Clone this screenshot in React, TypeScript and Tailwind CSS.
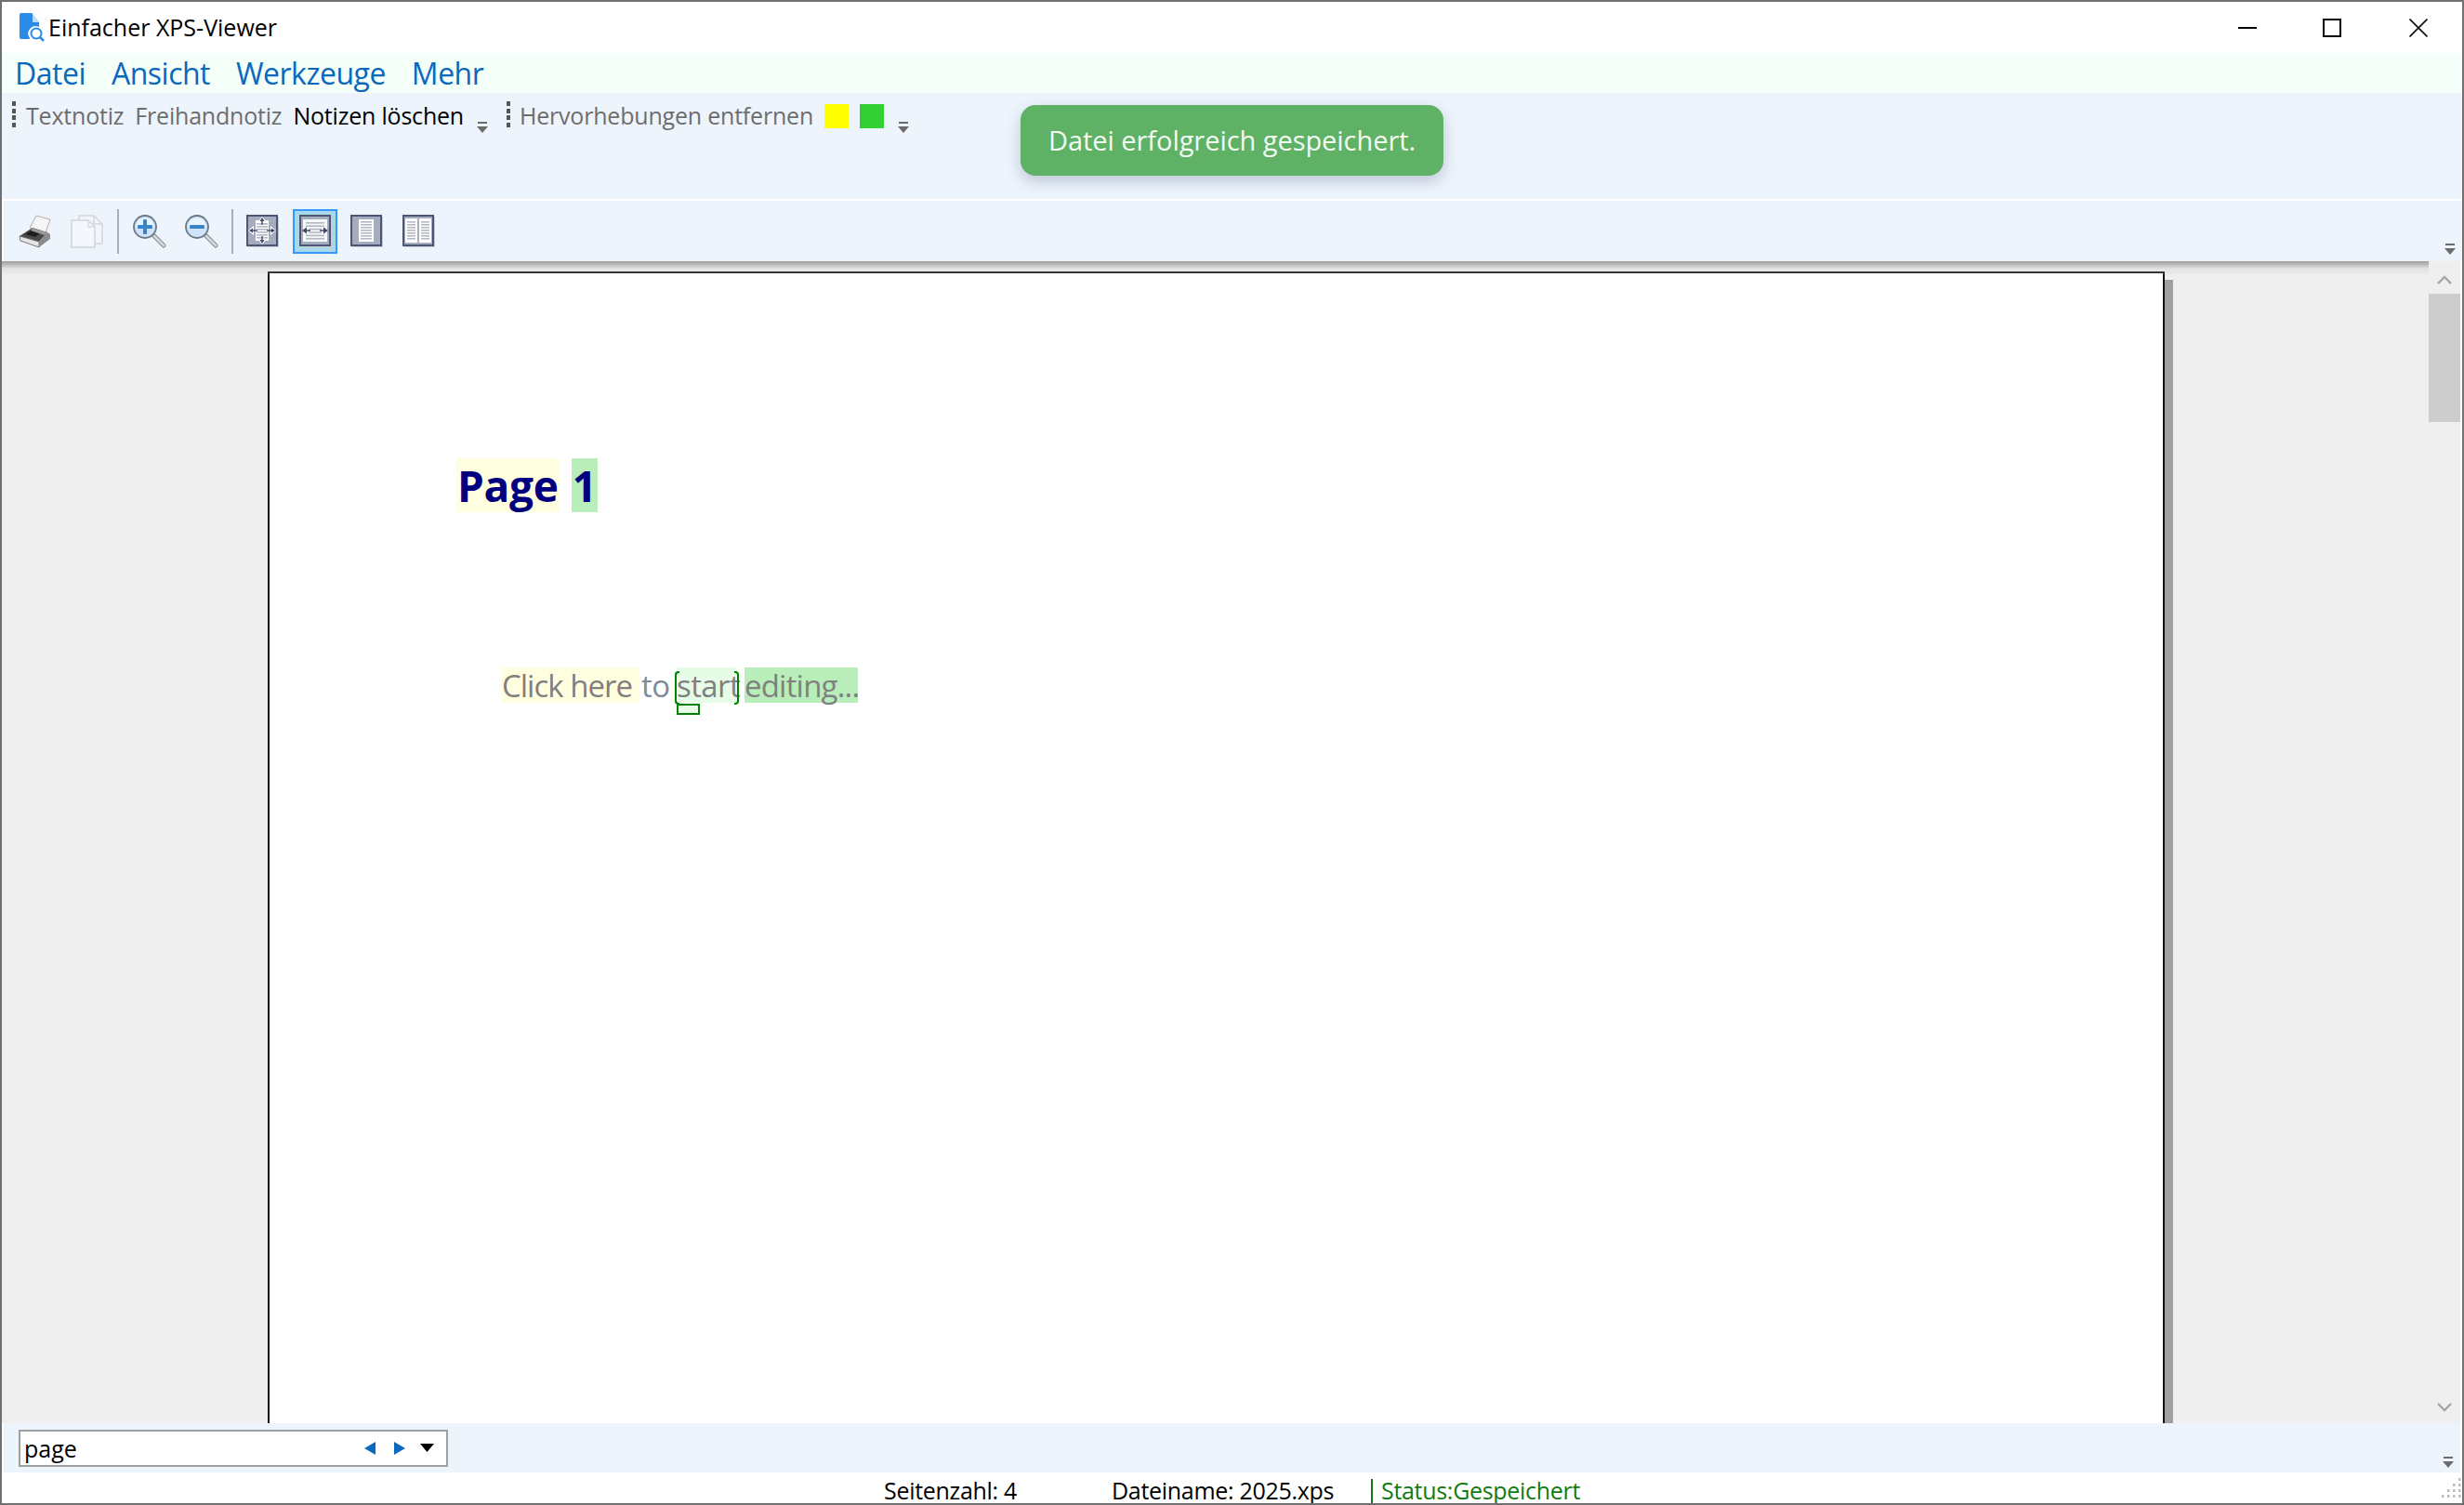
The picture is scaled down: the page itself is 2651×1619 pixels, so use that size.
const ui = { fontFamily: '"Open Sans", "Noto Sans", sans-serif' };

function AppIcon() {
  return (
    <svg width="28" height="31" viewBox="0 0 28 31">
      <path d="M1 2a2 2 0 0 1 2-2h11l8 10v5a8 8 0 0 0-10 12v1H3a2 2 0 0 1-2-2z" fill="#2b8be8" />
      <path d="M15 1l7 9h-7z" fill="#bcdcf9" />
      <circle cx="19" cy="22" r="5.5" fill="#fff" stroke="#2b8be8" strokeWidth="2" />
      <path d="M23 26l4 4" stroke="#2b8be8" strokeWidth="2.5" />
    </svg>
  );
}

function Overflow() {
  return (
    <svg width="12" height="13" viewBox="0 0 12 13" className="block">
      <rect x="1" y="0" width="10" height="2" fill="#6b6b6b" />
      <path d="M0 5h12l-6 7z" fill="#6b6b6b" />
    </svg>
  );
}

function Gripper() {
  return (
    <div className="flex h-[28px] w-[5px] flex-col justify-between">
      <div className="h-[5px] w-[4px] bg-[#555]" />
      <div className="h-[5px] w-[4px] bg-[#555]" />
      <div className="h-[5px] w-[4px] bg-[#555]" />
      <div className="h-[5px] w-[4px] bg-[#555]" />
    </div>
  );
}

function Printer() {
  return (
    <svg width="36" height="36" viewBox="0 0 36 36">
      <path d="M12 14L19 1l15 4-6 17z" fill="#f6f6f6" stroke="#b0b0b0" />
      <path d="M1 23l14-9 16 5-9 10z" fill="#4a4a4a" />
      <path d="M7 21l8-5 9 3-6 5z" fill="#1e1e1e" />
      <path d="M15 14l16 5-3 3-15-5z" fill="#9a9a9a" />
      <path d="M1 23l21 6v6L2 28z" fill="#e4e4e4" stroke="#5a5a5a" strokeWidth="0.8" />
      <path d="M22 29l9-10 3 2v5l-12 9z" fill="#8c8c8c" />
    </svg>
  );
}

function CopyIcon() {
  return (
    <svg width="36" height="36" viewBox="0 0 36 36">
      <path d="M9 1h16l9 9v21H9z" fill="#f2f5f9" stroke="#d2d6dc" strokeWidth="1.5" />
      <path d="M25 1v9h9" fill="none" stroke="#d2d6dc" strokeWidth="1.5" />
      <path d="M1 6h18l7 7v22H1z" fill="#f4f7fb" stroke="#cfd3da" strokeWidth="1.5" />
      <path d="M19 6v7h7" fill="none" stroke="#d8dce2" strokeWidth="1.5" />
    </svg>
  );
}

function Magnifier({ plus }: { plus?: boolean }) {
  return (
    <svg width="36" height="36" viewBox="0 0 36 36">
      <path d="M22 22l11 11" stroke="#9aa0a6" strokeWidth="5" strokeLinecap="round" />
      <path d="M23 23l10 10" stroke="#dfe2e5" strokeWidth="2" strokeLinecap="round" />
      <circle cx="13" cy="13" r="12" fill="#cfe4fa" stroke="#6d7884" strokeWidth="1.8" />
      <path d="M3.5 13a9.5 9.5 0 0 1 19 0z" fill="#eaf4fe" />
      <rect x="5" y="11" width="16" height="4" rx="1" fill="#3a83c6" />
      {plus && <rect x="11" y="5" width="4" height="16" rx="1" fill="#3a83c6" />}
    </svg>
  );
}

function Frame({ children }: { children: React.ReactNode }) {
  return (
    <svg width="35" height="35" viewBox="0 0 35 35">
      <rect x="2" y="2" width="33" height="33" fill="#c6cbd5" />
      <rect x="1" y="1" width="32" height="32" fill="#a5acbd" stroke="#4b5774" strokeWidth="2" />
      {children}
    </svg>
  );
}

function Lines({ x, y, w, n, gap }: { x: number; y: number; w: number; n: number; gap: number }) {
  return (
    <>
      {Array.from({ length: n }).map((_, i) => (
        <rect key={i} x={x} y={y + i * gap} width={w} height="1.6" fill="#b4b8c3" />
      ))}
    </>
  );
}

function FitWhole() {
  return (
    <Frame>
      <rect x="10" y="6" width="14" height="22" fill="#fff" />
      <path d="M17 2l-5 6h10zM17 32l-5-6h10zM2 17l6-5v10zM32 17l-6-5v10z" fill="#fff" />
      <Lines x={11} y={9} w={12} n={6} gap={3} />
      <path d="M17 5v6M17 23v6M5 17h7M22 17h7" stroke="#4b5774" strokeWidth="1.5" />
      <path d="M17 3l-2.5 4h5zM17 31l-2.5-4h5zM3 17l4-2.5v5zM31 17l-4-2.5v5z" fill="#3f4b68" />
    </Frame>
  );
}

function FitWidth() {
  return (
    <Frame>
      <rect x="4" y="5" width="26" height="24" fill="#f6f7f9" />
      <Lines x={7} y={8} w={20} n={6} gap={3.4} />
      <path d="M4 17l6-4.5v9zM30 17l-6-4.5v9z" fill="#fff" />
      <path d="M6 17h6M22 17h6" stroke="#3f4b68" strokeWidth="1.6" />
      <path d="M3 17l5-3.5v7zM31 17l-5-3.5v7z" fill="#3f4b68" />
    </Frame>
  );
}

function OnePage() {
  return (
    <Frame>
      <rect x="9" y="5" width="16" height="24" fill="#fff" />
      <Lines x={11} y={7} w={12} n={7} gap={3} />
    </Frame>
  );
}

function TwoPages() {
  return (
    <Frame>
      <rect x="3" y="4" width="13" height="26" fill="#fff" />
      <rect x="18" y="4" width="13" height="26" fill="#fff" />
      <Lines x={5} y={7} w={9} n={7} gap={3} />
      <Lines x={20} y={7} w={9} n={7} gap={3} />
    </Frame>
  );
}

function Sep() {
  return <div className="h-[48px] w-[2px] bg-[#a9b0b8]" />;
}

function Grip() {
  const dots = [
    [18, 0],
    [18, 6],
    [12, 6],
    [18, 12],
    [12, 12],
    [6, 12],
    [18, 18],
    [12, 18],
    [6, 18],
    [0, 18],
  ];
  return (
    <svg width="21" height="21" viewBox="0 0 21 21">
      {dots.map(([x, y]) => (
        <rect key={`${x}-${y}`} x={x} y={y} width="2.5" height="3" fill="#bdbdbd" />
      ))}
    </svg>
  );
}

export default function App() {
  return (
    <div
      className="relative flex h-[1619px] w-[2651px] flex-col overflow-hidden border-2 border-[#707070] bg-white"
      style={ui}
    >
      {/* title bar */}
      <div className="flex h-[55px] shrink-0 items-center pl-[18px]">
        <AppIcon />
        <span className="ml-[4px] text-[25px] text-black">Einfacher XPS-Viewer</span>
        <div className="ml-auto flex items-center">
          <svg width="20" height="20" viewBox="0 0 20 20" className="mr-[71px]">
            <rect y="9" width="20" height="2" fill="#000" />
          </svg>
          <svg width="20" height="20" viewBox="0 0 20 20" className="mr-[73px]">
            <rect x="1" y="1" width="18" height="18" fill="none" stroke="#000" strokeWidth="2" />
          </svg>
          <svg width="20" height="20" viewBox="0 0 20 20" className="mr-[37px]">
            <path d="M0.5 0.5l19 19M19.5 0.5l-19 19" stroke="#111" strokeWidth="1.7" />
          </svg>
        </div>
      </div>

      {/* menu */}
      <div className="flex h-[43px] shrink-0 items-center gap-[28px] bg-[#f4fff9] pl-[14px] text-[32px] tracking-[-0.5px] text-[#0a68bd]">
        <span>Datei</span>
        <span>Ansicht</span>
        <span>Werkzeuge</span>
        <span>Mehr</span>
      </div>

      {/* notes toolbar */}
      <div className="flex h-[114px] shrink-0 items-start bg-[#edf4fc] pt-[9px] pl-[11px] text-[25px] leading-[30px] tracking-[-0.2px] text-[#6d6d6d]">
        <Gripper />
        <span className="ml-[10px]">Textnotiz</span>
        <span className="ml-[12px]">Freihandnotiz</span>
        <span className="ml-[12px] text-black">Notizen löschen</span>
        <div className="mt-[22px] ml-[14px]">
          <Overflow />
        </div>
        <div className="ml-[20px]">
          <Gripper />
        </div>
        <span className="ml-[9px]">Hervorhebungen entfernen</span>
        <div className="mt-[3px] ml-[12px] h-[26px] w-[26px] bg-[#ffff00]" />
        <div className="mt-[3px] ml-[12px] h-[26px] w-[26px] bg-[#32d032]" />
        <div className="mt-[22px] ml-[15px]">
          <Overflow />
        </div>
      </div>

      {/* view toolbar */}
      <div className="mt-[2px] ml-[2px] flex h-[65px] shrink-0 items-center bg-[#edf4fc] pl-[16px]">
        <Printer />
        <div className="ml-[20px]">
          <CopyIcon />
        </div>
        <div className="ml-[14px]">
          <Sep />
        </div>
        <div className="ml-[15px]">
          <Magnifier plus />
        </div>
        <div className="ml-[20px]">
          <Magnifier />
        </div>
        <div className="ml-[14px]">
          <Sep />
        </div>
        <div className="ml-[14px]">
          <FitWhole />
        </div>
        <div className="ml-[15px] flex h-[48px] w-[48px] items-center justify-center border-2 border-[#3399ff] bg-[#a8d8ea]">
          <FitWidth />
        </div>
        <div className="ml-[14px]">
          <OnePage />
        </div>
        <div className="ml-[21px]">
          <TwoPages />
        </div>
        <div className="mt-[39px] mr-[7px] ml-auto">
          <Overflow />
        </div>
      </div>

      {/* document area */}
      <div className="relative flex min-h-0 flex-1 bg-[#efefef]">
        <div className="pointer-events-none absolute top-0 left-0 z-10 h-[16px] w-[2611px] bg-gradient-to-b from-[#9c9c9c] via-[#cfcfcf66] to-transparent" />
        <div className="flex min-w-0 flex-1 overflow-hidden pt-[11px] pl-[286px]">
          <div className="h-[1400px] w-[2041px] shrink-0 border-x-2 border-t-2 border-[#111] bg-white pt-[199px]">
            <div className="ml-[201px] flex h-[58px] items-center text-[46px] leading-[58px] font-bold text-[#00007f]">
              <span className="w-[111px] bg-[#ffffe0] pl-[1px] tracking-[-0.3px] whitespace-nowrap">Page</span>
              <span className="ml-[13px] w-[28px] bg-[#b9edb9] text-center">1</span>
            </div>
            <div className="relative mt-[167px] ml-[250px] flex h-[38px] text-[33px] leading-[40px] tracking-[-0.6px] text-[#808080]">
              <span className="w-[148px] bg-[#ffffe0] tracking-[-1px] whitespace-nowrap">Click here</span>
              <span className="w-[40px] pl-[2px] text-[#7d8a9a]">to</span>
              <span className="relative w-[65px] bg-[#e6fce6] text-center">
                start
                <span className="absolute top-[4px] left-[-2px] h-[36px] w-[5px] rounded-l-[4px] border-y-2 border-l-2 border-[#008000]" />
                <span className="absolute top-[4px] right-[-2px] h-[36px] w-[5px] rounded-r-[4px] border-y-2 border-r-2 border-[#008000]" />
                <span className="absolute top-[39px] left-0 h-[12px] w-[25px] border-2 border-[#008000] bg-[#e6fce6]" />
              </span>
              <span className="ml-[8px] w-[122px] bg-[#b9edb9] text-center tracking-[-0.8px] whitespace-nowrap">editing...</span>
            </div>
          </div>
          <div className="mt-[9px] h-[1400px] w-[9px] shrink-0 bg-[#a0a0a0]" />
        </div>
        <div className="flex w-[34px] shrink-0 flex-col items-center bg-[#efefef] pt-[14px]">
          <svg width="16" height="12" viewBox="0 0 16 12">
            <path d="M1 10l7-7 7 7" fill="none" stroke="#a6a6a6" strokeWidth="2.4" />
          </svg>
          <div className="mt-[9px] h-[138px] w-full bg-[#cdcdcd]" />
          <svg width="16" height="12" viewBox="0 0 16 12" className="mt-auto mb-[11px]">
            <path d="M1 2l7 7 7-7" fill="none" stroke="#a6a6a6" strokeWidth="2.4" />
          </svg>
        </div>
        <div className="w-[2px] shrink-0 bg-white" />
      </div>

      {/* find toolbar */}
      <div className="mr-[2px] ml-[2px] flex h-[53px] shrink-0 items-center bg-[#edf4fc] pl-[16px]">
        <div className="flex h-[40px] w-[462px] items-center border-2 border-[#a0a0a0] bg-white pl-[4px] text-[25px] leading-none text-black">
          <span className="pt-[2px]">page</span>
          <svg width="12" height="14" viewBox="0 0 12 14" className="ml-auto">
            <path d="M12 0v14L0 7z" fill="#0a68bd" />
          </svg>
          <svg width="12" height="14" viewBox="0 0 12 14" className="ml-[20px]">
            <path d="M0 0v14l12-7z" fill="#0a68bd" />
          </svg>
          <svg width="15" height="9" viewBox="0 0 15 9" className="mr-[13px] ml-[16px]">
            <path d="M0 0h15L7.5 9z" fill="#000" />
          </svg>
        </div>
        <div className="mt-[31px] mr-[7px] ml-auto">
          <Overflow />
        </div>
      </div>

      {/* status bar */}
      <div className="flex h-[33px] shrink-0 pl-[949px] text-[25px] leading-none tracking-[-0.3px] text-black">
        <span className="mt-[7px] w-[245px] whitespace-nowrap">Seitenzahl: 4</span>
        <span className="mt-[7px] w-[279px] whitespace-nowrap">Dateiname: 2025.xps</span>
        <div className="mt-[7px] h-[26px] w-[2px] bg-[#107c10]" />
        <span className="mt-[7px] ml-[9px] whitespace-nowrap text-[#107c10]">Status:Gespeichert</span>
        <div className="mt-[6px] mr-[1px] ml-auto">
          <Grip />
        </div>
      </div>

      {/* toast */}
      <div className="absolute top-[111px] left-[1096px] z-20 flex h-[76px] w-[455px] items-center justify-center rounded-[16px] bg-[#5fb165] text-[29px] tracking-[-0.05px] text-[#f2fbf2] shadow-[0_6px_16px_rgba(60,80,110,0.28)]">
        Datei erfolgreich gespeichert.
      </div>
    </div>
  );
}
